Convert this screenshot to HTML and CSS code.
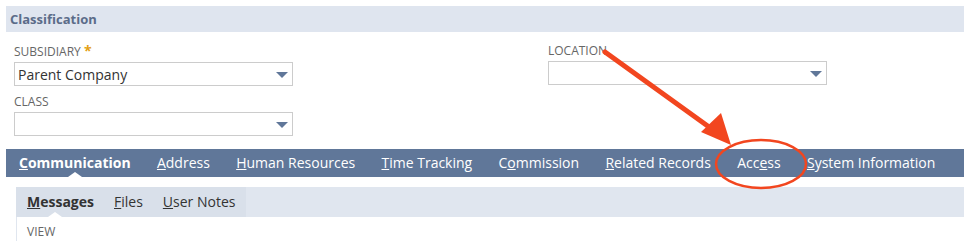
FILE: index.html
```html
<!DOCTYPE html>
<html lang="en">
<head>
    <meta charset="UTF-8">
    <title>Classification</title>
    <link rel="stylesheet" href="styles.css">
</head>
<body>
    <div class="page">
        <div class="section-header">Classification</div>

        <div class="fields">
            <div class="field-col">
                <div class="field">
                    <div class="field-label">SUBSIDIARY <span class="required">*</span></div>
                    <div class="select"><span class="select-value">Parent Company</span><span class="caret"></span></div>
                </div>
                <div class="field">
                    <div class="field-label">CLASS</div>
                    <div class="select"><span class="select-value"></span><span class="caret"></span></div>
                </div>
            </div>
            <div class="field-col col-right">
                <div class="field">
                    <div class="field-label">LOCATION</div>
                    <div class="select"><span class="select-value"></span><span class="caret"></span></div>
                </div>
            </div>
        </div>

        <div class="tab-bar">
            <div class="tab active"><u>C</u>ommunication</div>
            <div class="tab"><u>A</u>ddress</div>
            <div class="tab"><u>H</u>uman Resources</div>
            <div class="tab"><u>T</u>ime Tracking</div>
            <div class="tab">C<u>o</u>mmission</div>
            <div class="tab"><u>R</u>elated Records</div>
            <div class="tab">Acc<u>e</u>ss</div>
            <div class="tab"><u>S</u>ystem Information</div>
        </div>

        <div class="subtab-area">
            <div class="subtab-bar">
                <div class="subtab-group">
                    <div class="subtab active"><u>M</u>essages</div>
                    <div class="subtab"><u>F</u>iles</div>
                    <div class="subtab"><u>U</u>ser Notes</div>
                </div>
            </div>
            <div class="subtab-body">
                <div class="field-label">VIEW</div>
            </div>
        </div>

        <!-- annotation -->
        <svg class="annotation" width="964" height="241" viewBox="0 0 964 241">
            <line x1="605" y1="52" x2="716" y2="132" stroke="#f2461f" stroke-width="5" stroke-linecap="round"/>
            <polygon points="731,145 701,132 721,113" fill="#f2461f"/>
            <ellipse cx="761" cy="164" rx="45" ry="24" fill="none" stroke="#f2461f" stroke-width="2.5"/>
        </svg>
    </div>
</body>
</html>
```

FILE: styles.css
```css
* {
    margin: 0;
    padding: 0;
    box-sizing: border-box;
}

body {
    width: 964px;
    height: 241px;
    background: #ffffff;
    font-family: 'Open Sans', 'Liberation Sans', sans-serif;
    overflow: hidden;
}

.page {
    position: relative;
    padding: 6px 0 0 6px;
    height: 241px;
}

.section-header {
    height: 26px;
    line-height: 26px;
    background: #dfe5ef;
    color: #5b6c89;
    font-size: 13px;
    font-weight: bold;
    padding-left: 4px;
}

.fields {
    display: flex;
    padding: 11px 0 0 8px;
}

.field-col {
    width: 279px;
}

.col-right {
    margin-left: 255px;
}

.field {
    margin-bottom: 8px;
}

.field-label {
    color: #666666;
    font-size: 12px;
    line-height: 16px;
    margin-bottom: 2px;
}

.required {
    color: #e3a014;
    font-weight: bold;
    font-size: 14px;
}

.select {
    position: relative;
    width: 279px;
    height: 24px;
    border: 1px solid #cccccc;
    display: flex;
    align-items: center;
    padding-left: 3px;
}

.select-value {
    color: #333333;
    font-size: 14px;
}

.caret {
    position: absolute;
    right: 4px;
    top: 9px;
    width: 0;
    height: 0;
    border-left: 6px solid transparent;
    border-right: 6px solid transparent;
    border-top: 6px solid #607799;
}

.tab-bar {
    margin-top: 5px;
    height: 28px;
    background: #607799;
    display: flex;
    align-items: center;
}

.tab {
    position: relative;
    color: #ffffff;
    font-size: 14px;
    padding: 0 13.3px 0 13px;
    line-height: 28px;
    white-space: nowrap;
}

.tab.active {
    font-weight: bold;
}

.tab.active::after {
    content: '';
    position: absolute;
    left: 50%;
    bottom: 0;
    margin-left: -7px;
    border-left: 7px solid transparent;
    border-right: 7px solid transparent;
    border-bottom: 5px solid #ffffff;
}

.subtab-area {
    margin: 10px 0 0 10px;
}

.subtab-bar {
    height: 30px;
    background: #e0e6ef;
    display: flex;
}

.subtab-group {
    display: flex;
    background: #d9e0ea;
    padding: 0 1px;
}

.subtab {
    position: relative;
    color: #333333;
    font-size: 14px;
    line-height: 30px;
    padding: 0 10px;
}

.subtab.active {
    font-weight: bold;
}

.subtab.active::after {
    content: '';
    position: absolute;
    left: 50%;
    bottom: 0;
    margin-left: -13px;
    border-left: 7px solid transparent;
    border-right: 7px solid transparent;
    border-bottom: 5px solid #ffffff;
}

.subtab-body {
    border-left: 1px solid #e0e6ef;
    padding: 7px 0 0 10px;
    height: 30px;
}

.annotation {
    position: absolute;
    left: 0;
    top: 0;
    pointer-events: none;
}
```
